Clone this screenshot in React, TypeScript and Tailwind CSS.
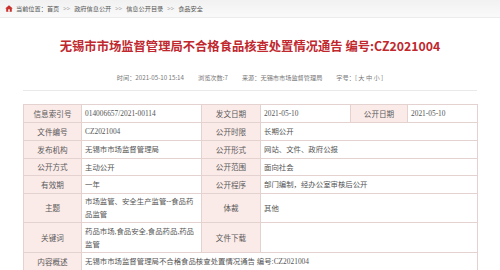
import React from "react";

const CJK = '"Noto Sans CJK SC", "Noto Sans", sans-serif';
const VAL = '"Liberation Serif", "Noto Sans CJK SC", serif';

function Label({ children }: { children: React.ReactNode }) {
  return (
    <td
      className="border border-[#e3d2d0] bg-[#faeae8] text-center align-middle text-[7.6px] leading-[10px] text-[#5a5a5a]"
      style={{ fontFamily: CJK }}
    >
      {children}
    </td>
  );
}

function Val({ children, span }: { children?: React.ReactNode; span?: number }) {
  return (
    <td
      colSpan={span}
      className="border border-[#e3d2d0] bg-white pl-[3px] pr-[6px] text-left align-middle text-[7.4px] leading-[13px] text-[#555]"
      style={{ fontFamily: VAL }}
    >
      {children}
    </td>
  );
}

function HouseIcon() {
  return (
    <svg width="8" height="7" viewBox="0 0 8 7" className="shrink-0">
      <path d="M4 0.3 L7.8 3.6 L6.8 3.6 L6.8 6.7 L1.2 6.7 L1.2 3.6 L0.2 3.6 Z" fill="#c9302c" />
      <rect x="3.2" y="4.3" width="1.6" height="2.4" fill="#fff" />
    </svg>
  );
}

export default function App() {
  const sep = <span className="mx-[4px] text-[#888]">&gt;&gt;</span>;
  return (
    <div className="w-[500px] h-[270px] overflow-hidden bg-white" style={{ fontFamily: CJK }}>
      {/* breadcrumb */}
      <div className="flex h-[18px] items-center bg-gradient-to-b from-[#f1f1f1] to-[#fafafa] border-b border-[#ececec] pl-[5px] text-[6.2px] text-[#555]">
        <HouseIcon />
        <span className="ml-[3px]">当前位置：首页</span>
        {sep}
        <span>政府信息公开</span>
        {sep}
        <span>信息公开目录</span>
        {sep}
        <span>食品安全</span>
      </div>

      <div className="mx-[23px]">
        {/* title */}
        <div className="mt-[20px] text-center text-[12.3px] font-bold leading-[16px] text-[#c0282e]">
          无锡市市场监督管理局不合格食品核查处置情况通告 编号:CZ2021004
        </div>
        {/* meta */}
        <div className="mt-[20px] flex justify-center gap-[14px] text-[6.2px] leading-[8px] text-[#777]">
          <span>时间：2021-05-10 15:14</span>
          <span>浏览次数:7</span>
          <span>来源：无锡市市场监督管理局</span>
          <span>字号：[ 大 中 小 ]</span>
        </div>
        <div className="mt-[8px] h-px bg-[#e9e9e9]" />

        {/* table */}
        <table className="mt-[13px] w-[454px] table-fixed border-collapse">
          <colgroup>
            <col className="w-[58px]" />
            <col className="w-[120px]" />
            <col className="w-[59px]" />
            <col className="w-[90px]" />
            <col className="w-[57px]" />
            <col className="w-[70px]" />
          </colgroup>
          <tbody>
            <tr className="h-[18px]">
              <Label>信息索引号</Label>
              <Val>014006657/2021-00114</Val>
              <Label>发文日期</Label>
              <Val>2021-05-10</Val>
              <Label>公开日期</Label>
              <Val>2021-05-10</Val>
            </tr>
            <tr className="h-[18px]">
              <Label>文件编号</Label>
              <Val>CZ2021004</Val>
              <Label>公开时限</Label>
              <Val span={3}>长期公开</Val>
            </tr>
            <tr className="h-[18px]">
              <Label>发布机构</Label>
              <Val>无锡市市场监督管理局</Val>
              <Label>公开形式</Label>
              <Val span={3}>网站、文件、政府公报</Val>
            </tr>
            <tr className="h-[17px]">
              <Label>公开方式</Label>
              <Val>主动公开</Val>
              <Label>公开范围</Label>
              <Val span={3}>面向社会</Val>
            </tr>
            <tr className="h-[18px]">
              <Label>有效期</Label>
              <Val>一年</Val>
              <Label>公开程序</Label>
              <Val span={3}>部门编制，经办公室审核后公开</Val>
            </tr>
            <tr className="h-[29px]">
              <Label>主题</Label>
              <Val>市场监管、安全生产监管--食品药品监管</Val>
              <Label>体裁</Label>
              <Val span={3}>其他</Val>
            </tr>
            <tr className="h-[30px]">
              <Label>关键词</Label>
              <Val>药品市场,食品安全,食品药品,药品监管</Val>
              <Label>文件下载</Label>
              <Val span={3}></Val>
            </tr>
            <tr className="h-[18px]">
              <Label>内容概述</Label>
              <Val span={5}>无锡市市场监督管理局不合格食品核查处置情况通告 编号:CZ2021004</Val>
            </tr>
          </tbody>
        </table>
      </div>
    </div>
  );
}
